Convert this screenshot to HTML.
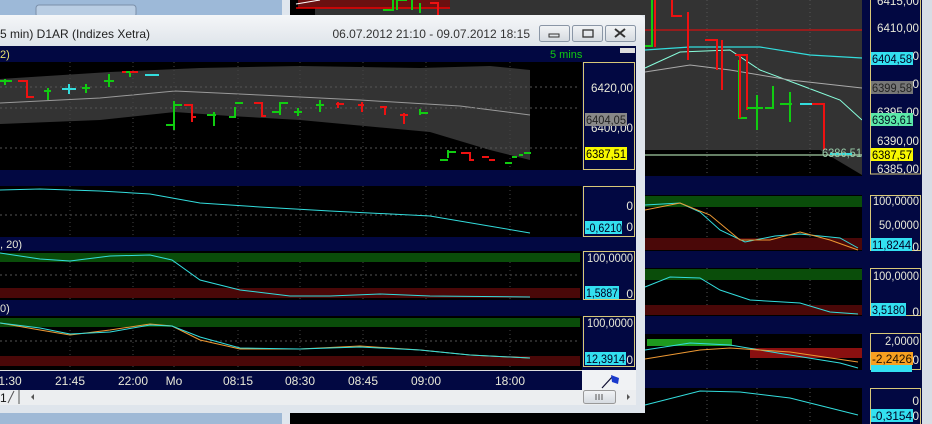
<!DOCTYPE html>
<html><head><meta charset="utf-8"><style>
html,body{margin:0;padding:0;width:932px;height:424px;overflow:hidden;background:#000}
svg{display:block}
text{font-family:"Liberation Sans",sans-serif}
</style></head><body>
<svg width="932" height="424" viewBox="0 0 932 424" xmlns="http://www.w3.org/2000/svg">
<defs>
<linearGradient id="tb" x1="0" y1="0" x2="0" y2="1"><stop offset="0" stop-color="#f4f6f8"/><stop offset="1" stop-color="#dfe4ea"/></linearGradient>
<linearGradient id="btn" x1="0" y1="0" x2="0" y2="1"><stop offset="0" stop-color="#f2f4f6"/><stop offset="1" stop-color="#d5dae0"/></linearGradient>
</defs>
<rect x="0" y="0" width="284" height="16" fill="#9db9d8"/>
<rect x="36" y="5" width="100" height="12" rx="3" fill="#b9cde3" stroke="#7a8ea8"/>
<rect x="0" y="404" width="284" height="20" fill="#9fb9d6"/>
<rect x="282" y="0" width="8" height="16" fill="#dfe6ee"/>
<rect x="282" y="404" width="8" height="20" fill="#dfe6ee"/>
<rect x="290" y="0" width="642" height="424" fill="#000"/>
<rect x="315" y="0" width="547" height="16" fill="#333"/>
<rect x="298" y="0" width="152" height="8" fill="#6b1010"/>
<line x1="296" y1="4" x2="320" y2="0" stroke="#fff"/>
<line x1="296" y1="8" x2="450" y2="8" stroke="#e00" stroke-width="1.5"/>
<path d="M383 10h10v-10M397 10v-10h10M412 10v-10M420 3v10" stroke="#1c1" stroke-width="2" fill="none"/>
<path d="M430 3h8v13" stroke="#e11" stroke-width="2" fill="none"/>
<path d="M645 0H862V175L820 150H645Z" fill="#333"/>
<line x1="645" y1="30" x2="862" y2="30" stroke="#d01010" stroke-width="1.2"/>
<path d="M645 50L690 47L760 47L810 55L862 58" stroke="#3dd" fill="none" stroke-width="1.2"/>
<path d="M645 68L680 52L730 50L760 70L800 85L840 100L862 120" stroke="#8fd" fill="none" stroke-width="1"/>
<path d="M645 72L690 65L730 70L790 80L862 88" stroke="#aaa" fill="none" stroke-width="1"/>
<path d="M645 155L862 155" stroke="#cfc" stroke-width="1"/>
<g stroke-dasharray="1 3" stroke="#555"><line x1="707" y1="0" x2="707" y2="424"/><line x1="757" y1="0" x2="757" y2="424"/><line x1="810" y1="0" x2="810" y2="424"/></g>
<path d="M655 0V47M672 0V16h10M688 12V60M705 40h12V70M722 40V90M735 55h12V110" stroke="#e11" stroke-width="2" fill="none"/>
<path d="M739 60V118h8M747 108h16M757 95V130M765 108h8V86M780 104h12M790 92V122" stroke="#1c1" stroke-width="2" fill="none"/>
<path d="M740 55V118M808 104h16V150" stroke="#e11" stroke-width="2" fill="none"/>
<path d="M800 104h12M830 154h22" stroke="#3dd" stroke-width="2"/>
<path d="M652 0V46h-8" stroke="#1c1" stroke-width="2" fill="none"/>
<rect x="645" y="176" width="287" height="19" fill="#020842"/>
<rect x="645" y="196" width="217" height="11" fill="#0a4d0a"/>
<rect x="645" y="238" width="217" height="12" fill="#4a0808"/>
<path d="M645 205L680 203L700 212L720 230L745 242L775 236L800 234L840 238L858 248" stroke="#3dd" fill="none"/>
<path d="M645 210L680 203L710 215L740 240L770 240L800 232L830 240L858 250" stroke="#e93" fill="none"/>
<rect x="645" y="251" width="287" height="17" fill="#020842"/>
<rect x="645" y="269" width="217" height="11" fill="#0a4d0a"/>
<rect x="645" y="305" width="217" height="10" fill="#4a0808"/>
<path d="M645 287L670 277L700 278L720 290L750 300L800 303L830 312L858 314" stroke="#3dd" fill="none"/>
<rect x="645" y="316" width="287" height="18" fill="#020842"/>
<path d="M750 348H862V358H750Z" fill="#8a1010"/>
<path d="M647 339h85v7h-85z" fill="#1e9a1e"/>
<path d="M645 350L690 343L730 345L790 355L840 363L858 368" stroke="#3dd" fill="none"/>
<path d="M645 359L700 350L730 348L790 352L858 362" stroke="#e93" fill="none"/>
<rect x="645" y="370" width="287" height="18" fill="#020842"/>
<path d="M645 405L700 391L740 392L790 398L830 408L858 415" stroke="#3dd" fill="none"/>
<rect x="862" y="0" width="60" height="424" fill="#020842"/>
<rect x="922" y="0" width="10" height="424" fill="#d7dde5"/>
<g fill="none" stroke="#d8c878"><rect x="870.5" y="-2" width="50" height="176"/><rect x="870.5" y="195.5" width="50" height="55"/><rect x="870.5" y="268.5" width="50" height="47"/><rect x="870.5" y="333.5" width="50" height="36"/><rect x="870.5" y="388.5" width="50" height="40"/></g>
<g font-size="12" fill="#e8e8d8" text-anchor="end" lengthAdjust="spacingAndGlyphs">
<text x="919" y="5" textLength="42" lengthAdjust="spacingAndGlyphs">6415,00</text><text x="919" y="32" textLength="42" lengthAdjust="spacingAndGlyphs">6410,00</text><text x="919" y="60">0</text><text x="919" y="88">0</text><text x="919" y="116" textLength="42" lengthAdjust="spacingAndGlyphs">6395,00</text><text x="919" y="145" textLength="42" lengthAdjust="spacingAndGlyphs">6390,00</text><text x="919" y="173" textLength="42" lengthAdjust="spacingAndGlyphs">6385,00</text>
<text x="919" y="205" textLength="46" lengthAdjust="spacingAndGlyphs">100,0000</text><text x="919" y="229" textLength="40" lengthAdjust="spacingAndGlyphs">50,0000</text><text x="919" y="251">0</text>
<text x="919" y="280" textLength="46" lengthAdjust="spacingAndGlyphs">100,0000</text><text x="919" y="316">0</text><text x="919" y="345" textLength="34" lengthAdjust="spacingAndGlyphs">2,0000</text><text x="919" y="364">0</text><text x="919" y="405">0</text><text x="919" y="420">0</text></g>
<g font-size="12">
<rect x="871" y="52" width="42" height="13" fill="#33e0f0"/><text x="872" y="63" fill="#002" textLength="40" lengthAdjust="spacingAndGlyphs">6404,58</text>
<rect x="871" y="81" width="42" height="13" fill="#777"/><text x="872" y="92" fill="#222" textLength="40" lengthAdjust="spacingAndGlyphs">6399,58</text>
<rect x="871" y="113" width="42" height="13" fill="#5be8a8"/><text x="872" y="124" fill="#012" textLength="40" lengthAdjust="spacingAndGlyphs">6393,61</text>
<rect x="871" y="148" width="42" height="13" fill="#f8f800"/><text x="872" y="159" fill="#000" textLength="40" lengthAdjust="spacingAndGlyphs">6387,57</text>
<text x="822" y="157" fill="#9ca" textLength="40" lengthAdjust="spacingAndGlyphs">6386,51</text>
<rect x="871" y="238" width="41" height="13" fill="#33e0f0"/><text x="872" y="249" fill="#002" textLength="39" lengthAdjust="spacingAndGlyphs">11,8244</text>
<rect x="871" y="303" width="35" height="13" fill="#33e0f0"/><text x="872" y="314" fill="#002" textLength="33" lengthAdjust="spacingAndGlyphs">3,5180</text>
<rect x="871" y="364" width="41" height="8" fill="#33e0f0"/>
<rect x="871" y="352" width="42" height="13" fill="#f8a020"/><text x="872" y="363" fill="#210" textLength="40" lengthAdjust="spacingAndGlyphs">-2,2426</text>
<rect x="871" y="409" width="42" height="13" fill="#33e0f0"/><text x="872" y="420" fill="#002" textLength="40" lengthAdjust="spacingAndGlyphs">-0,3154</text>
</g>

<rect x="0" y="15" width="645" height="398" fill="#dfe5ec"/>
<path d="M0 15H638Q645 15 645 22V46H0Z" fill="url(#tb)"/>
<text x="0" y="38" font-size="12" fill="#222">5 min)  D1AR (Indizes Xetra)</text>
<text x="530" y="38" font-size="12" fill="#333" text-anchor="end">06.07.2012 21:10 - 09.07.2012 18:15</text>
<g stroke="#8a96a6" fill="url(#btn)"><rect x="539.5" y="25.5" width="30" height="16" rx="2"/><rect x="572.5" y="25.5" width="30" height="16" rx="2"/><rect x="605.5" y="25.5" width="30" height="16" rx="2"/></g>
<rect x="549" y="34" width="10" height="3" fill="none" stroke="#333"/>
<rect x="583" y="30" width="10" height="7" fill="none" stroke="#333" stroke-width="1.3"/>
<path d="M615 29l10 8M625 29l-10 8" stroke="#333" stroke-width="2"/>
<rect x="0" y="46" width="636" height="344" fill="#000"/>
<rect x="0" y="46" width="636" height="16" fill="#020842"/>
<text x="0" y="58" font-size="11" fill="#e8e070">2)</text>
<text x="550" y="58" font-size="11" fill="#1c1">5 mins</text>
<rect x="620" y="48" width="15" height="5" fill="#ddd"/>
<path d="M0 79L110 72L200 68L300 66L420 68L490 66L530 70V160L490 150L430 132L300 120L230 116L175 112L100 120L0 124Z" fill="#333"/>
<path d="M0 103L100 98L175 91L260 95L360 100L460 106L530 115" stroke="#9a9a9a" fill="none"/>
<g stroke="#555" stroke-dasharray="2 3"><line x1="0" y1="87" x2="580" y2="87"/><line x1="0" y1="108" x2="580" y2="108"/><line x1="0" y1="148" x2="580" y2="148"/><line x1="0" y1="215" x2="580" y2="215"/><line x1="0" y1="275" x2="580" y2="275"/><line x1="0" y1="341" x2="580" y2="341"/></g>
<g stroke="#444" stroke-dasharray="1 3"><line x1="70" y1="62" x2="70" y2="370"/><line x1="133" y1="62" x2="133" y2="370"/><line x1="174" y1="62" x2="174" y2="370"/><line x1="238" y1="62" x2="238" y2="370"/><line x1="300" y1="62" x2="300" y2="370"/><line x1="363" y1="62" x2="363" y2="370"/><line x1="426" y1="62" x2="426" y2="370"/><line x1="510" y1="62" x2="510" y2="370"/></g>
<g stroke-width="2" fill="none">
<path d="M0 81h12M5 79V85M44 91h7M48 88V100M82 88h8M86 84V93M104 81h10M109 74V87M126 72h8M130 72V77" stroke="#1c1"/>
<path d="M18 81h9V97h7M122 72h4M130 72h8" stroke="#e11"/>
<path d="M62 89h14M69 84V94M145 75h14" stroke="#3dd"/>
<path d="M166 125h8M174 101V130M174 105h8M207 115h9M214 112V126M235 107V117h-6M235 103h8M272 112h8M280 115V103h8M294 112h8M298 108V116M316 105h8M320 100V112M420 113h8M420 109V115" stroke="#1c1"/>
<path d="M184 105h8V117h4M192 117V122M254 103h8V116h4M336 104h8M338 102V108M358 105h6M362 102V112M380 107h7M385 108V115M400 115h8M404 113V124" stroke="#e11"/>
<path d="M440 160h8M448 150V158M448 152h8" stroke="#1c1"/>
<path d="M461 153h9V160h4M482 157h7M489 160h6" stroke="#e11"/>
<path d="M505 163h7M512 157h5M519 155h4M524 153h7" stroke="#1c1"/>
</g>
<rect x="0" y="170" width="636" height="16" fill="#020842"/>
<path d="M0 190L40 189L100 191L150 194L200 203L260 207L330 211L430 216L530 233" stroke="#3dd" fill="none"/>
<rect x="0" y="237" width="636" height="14" fill="#020842"/>
<text x="0" y="248" font-size="11" fill="#e8e8d8">, 20)</text>
<rect x="0" y="253" width="580" height="9" fill="#0a4d0a"/>
<rect x="0" y="288" width="580" height="10" fill="#4a0808"/>
<path d="M0 253L40 259L70 261L110 256L150 255L172 260L200 280L240 290L290 296L330 296L380 294L430 296L530 297" stroke="#3dd" fill="none"/>
<rect x="0" y="300" width="636" height="16" fill="#020842"/>
<text x="0" y="312" font-size="11" fill="#e8e8d8">0)</text>
<rect x="0" y="318" width="580" height="9" fill="#0a4d0a"/>
<rect x="0" y="356" width="580" height="10" fill="#4a0808"/>
<path d="M0 323L40 330L70 335L110 330L150 324L172 326L200 340L240 349L300 349L360 346L420 350L470 355L530 358" stroke="#e93" fill="none"/>
<path d="M0 323L40 328L70 334L110 332L150 325L172 326L200 337L240 348L300 349L360 347L420 350L470 355L530 358" stroke="#3dd" fill="none"/>
<rect x="582" y="62" width="54" height="308" fill="#020842"/>
<g fill="none" stroke="#d8c878"><rect x="583.5" y="62.5" width="51" height="107"/><rect x="583.5" y="186.5" width="51" height="50"/><rect x="583.5" y="251.5" width="51" height="48"/><rect x="583.5" y="316.5" width="51" height="50"/></g>
<g font-size="12" fill="#e8e8d8" text-anchor="end">
<text x="633" y="92" textLength="42" lengthAdjust="spacingAndGlyphs">6420,00</text><text x="633" y="132" textLength="42" lengthAdjust="spacingAndGlyphs">6400,00</text><text x="633" y="210">0</text><text x="633" y="231">0</text>
<text x="633" y="262" textLength="46" lengthAdjust="spacingAndGlyphs">100,0000</text><text x="633" y="298">0</text><text x="633" y="327" textLength="46" lengthAdjust="spacingAndGlyphs">100,0000</text><text x="633" y="364">0</text></g>
<g font-size="12">
<rect x="585" y="113" width="42" height="13" fill="#888"/><text x="586" y="124" fill="#222" textLength="40" lengthAdjust="spacingAndGlyphs">6404,05</text>
<rect x="585" y="147" width="42" height="13" fill="#f8f800"/><text x="586" y="158" fill="#000" textLength="40" lengthAdjust="spacingAndGlyphs">6387,51</text>
<rect x="585" y="221" width="37" height="13" fill="#33e0f0"/><text x="586" y="232" fill="#002" textLength="36" lengthAdjust="spacingAndGlyphs">-0,6210</text>
<rect x="585" y="286" width="34" height="13" fill="#33e0f0"/><text x="586" y="297" fill="#002" textLength="32" lengthAdjust="spacingAndGlyphs">1,5887</text>
<rect x="585" y="352" width="41" height="13" fill="#33e0f0"/><text x="586" y="363" fill="#002" textLength="39" lengthAdjust="spacingAndGlyphs">12,3914</text></g>
<rect x="0" y="370" width="582" height="20" fill="#020842"/>
<line x1="0" y1="370.5" x2="582" y2="370.5" stroke="#ddd"/>
<g font-size="12" fill="#e8e8d8" text-anchor="middle">
<text x="10" y="385">1:30</text><text x="70" y="385">21:45</text><text x="133" y="385">22:00</text><text x="174" y="385">Mo</text><text x="238" y="385">08:15</text><text x="300" y="385">08:30</text><text x="363" y="385">08:45</text><text x="426" y="385">09:00</text><text x="510" y="385">18:00</text></g>
<rect x="582" y="370" width="54" height="20" fill="#f0f2f4"/>
<path d="M602 388L613 376" stroke="#113" stroke-width="1.2"/>
<path d="M611 375l8 3l-1 6l-6-2z" fill="#1a3acc"/>
<rect x="0" y="390" width="636" height="15" fill="#eceef0"/>
<text x="0" y="402" font-size="12" fill="#111">1</text>
<path d="M8 403L14 391M19 390V404" stroke="#555" fill="none"/>
<path d="M31 397l3-3v6z" fill="#555"/>
<rect x="583.5" y="390.5" width="32" height="13" rx="2" fill="url(#btn)" stroke="#999"/>
<path d="M596 394v6M599 394v6M602 394v6" stroke="#555"/>
<path d="M627 394l3 3l-3 3z" fill="#555"/>
<rect x="636" y="46" width="9" height="367" fill="#dfe5ec"/>
</svg>
</body></html>
